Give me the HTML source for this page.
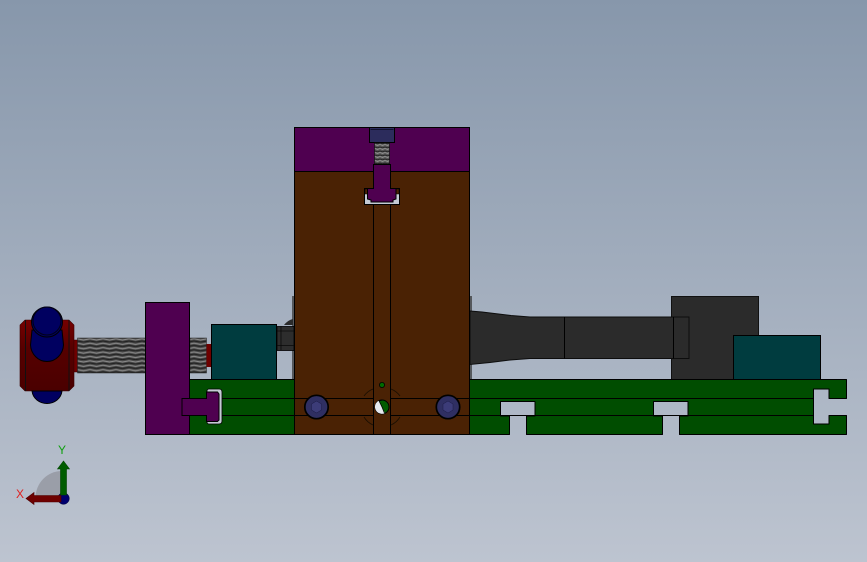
<!DOCTYPE html>
<html><head><meta charset="utf-8"><title>CAD model</title>
<style>html,body{margin:0;padding:0;width:867px;height:562px;overflow:hidden}svg{display:block}</style></head>
<body>
<svg width="867" height="562" viewBox="0 0 867 562" xmlns="http://www.w3.org/2000/svg">
<defs>
<linearGradient id="bg" x1="0" y1="0" x2="0" y2="1"><stop offset="0" stop-color="#8797ab"/><stop offset="1" stop-color="#bdc4d0"/></linearGradient>
<linearGradient id="red" x1="0" y1="0" x2="0" y2="1"><stop offset="0" stop-color="#760000"/><stop offset=".4" stop-color="#560000"/><stop offset="1" stop-color="#4a0000"/></linearGradient>
<pattern id="th" width="13" height="4.400" patternUnits="userSpaceOnUse" x="77" y="338">
<rect width="13" height="4.400" fill="#484848"/>
<path d="M0 .8L6.500 2L13 .8" stroke="#8a8a8a" stroke-width="1.100" fill="none"/>
<path d="M0 3L6.500 4.100L13 3" stroke="#202020" stroke-width="1.100" fill="none"/>
</pattern>
<pattern id="th2" width="5" height="4" patternUnits="userSpaceOnUse">
<rect width="5" height="4" fill="#565656"/><path d="M0 .5L2.500 1.500L5 .5" stroke="#8f8f8f" fill="none"/><path d="M0 3L2.500 3.800L5 3" stroke="#262626" fill="none"/>
</pattern>
</defs>
<rect width="867" height="562" fill="url(#bg)"/>

<!-- grey edge plates behind block -->
<rect x="292" y="296" width="3" height="84" fill="#55585c"/>
<rect x="469" y="296" width="3" height="84" fill="#55585c"/>

<!-- right side -->
<rect x="671.500" y="296.500" width="87" height="83" fill="#2b2b2b"/>
<path d="M671.500 379V296.500H758.500V335" fill="none" stroke="#111"/>
<path d="M470 311L482 312L511 315.500L530 317H689V358.500H530L510 360L490 362.500L470 364.500Z" fill="#2b2b2b" stroke="#0d0d0d"/>
<path d="M564.500 317V358.500M673.500 317V358.500" stroke="#000" fill="none"/>
<rect x="733.500" y="335.500" width="87" height="44" fill="#003c3f" stroke="#000"/>

<!-- rail -->
<path d="M189.500 379.500H846.500V398.500H829V389H813.500V424H829V415.500H846.500V434.500H679.500V416H688V401.500H653.500V416H662.500V434.500H526.500V416H535V401.500H500.500V416H509.500V434.500H189.500Z" fill="#004d00" stroke="#000" stroke-linejoin="round"/>
<path d="M190 398.500H813.500M190 415.500H813.500" stroke="#000" fill="none"/>

<!-- left assembly -->
<path d="M25 320H69L74 325V386L69 391H25L20 386V325Z" fill="url(#red)" stroke="#3a0000" stroke-width=".6"/>
<path d="M25.500 320V391M69 320V391" stroke="#111" fill="none"/>
<path d="M32 391C33 399 40 403.500 47 403.500C54 403.500 61 399 62 391Z" fill="#000060" stroke="#000"/>
<path d="M32 330L30.500 345C31 354 38 361.500 47 361.500C56 361.500 63 354 63.500 345L62 330Z" fill="#000060" stroke="#000"/>
<ellipse cx="47" cy="322" rx="15.500" ry="15" fill="#000060" stroke="#000"/>
<ellipse cx="47" cy="321" rx="14" ry="14" fill="none" stroke="#000018"/>
<rect x="74" y="340" width="3.500" height="32" fill="#6e0000" stroke="#3a0000" stroke-width=".5"/>
<rect x="77.500" y="338" width="68" height="35" fill="url(#th)" stroke="#222" stroke-width=".5"/>
<rect x="190" y="338" width="16.500" height="35" fill="url(#th)" stroke="#222" stroke-width=".5"/>
<rect x="206.500" y="344" width="5" height="23" fill="#6e0000"/>
<rect x="211.500" y="324.500" width="65" height="55" fill="#003c3f" stroke="#000"/>
<path d="M284 325Q288 320 293 319V325Z" fill="#2b2b2b"/>
<rect x="277" y="326.500" width="17" height="24" fill="#2d2d2d" stroke="#000" stroke-width=".8"/>
<path d="M281 326V350M277 331H294M277 345.500H294" stroke="#0a0a0a" stroke-width=".8" fill="none"/>

<rect x="145.500" y="302.500" width="44" height="132" fill="#4f0050" stroke="#000"/>
<path d="M207 391A2 2 0 0 1 209 389H219Q222 389 222 392V421Q222 424 219 424H209Q207 424 207 422Z" fill="#c4cad4" stroke="#000" stroke-width=".8"/>
<path d="M182 398.500H206.500V392H217.500L219 394V420L217.500 421.500H206.500V415.500H182Z" fill="#4f0050" stroke="#000"/>
<!-- main block -->
<rect x="294.500" y="171" width="175" height="263.500" fill="#4a2204" stroke="#000"/>
<rect x="294.500" y="127.500" width="175" height="44" fill="#4f0050" stroke="#000"/>
<path d="M294.500 398.500H373.500M390.500 398.500H469.500M294.500 415.500H373.500M390.500 415.500H469.500" stroke="#000" fill="none"/>
<path d="M373.500 204V434.500M390.500 204V434.500" stroke="#000" fill="none"/>
<g fill="none" stroke="#1a0f02" stroke-width=".8">
<path d="M364 396A20 20 0 0 1 373 389M391 389A20 20 0 0 1 400 396M364 417A20 20 0 0 0 373 425M391 425A20 20 0 0 0 400 417"/>
</g>

<!-- top bolt -->
<rect x="369.500" y="127.500" width="25" height="15" fill="#2c2c5c" stroke="#000"/>
<path d="M370.500 129.500H393.500" stroke="#12122e" fill="none"/>
<rect x="374.500" y="143" width="15" height="21" fill="url(#th2)" stroke="#111" stroke-width=".7"/>
<rect x="364.500" y="188.500" width="35" height="16" fill="#c4cad4" stroke="#000"/>
<rect x="365" y="189" width="3" height="5" fill="#4a2204" stroke="#000" stroke-width=".5"/>
<rect x="396" y="189" width="3" height="5" fill="#4a2204" stroke="#000" stroke-width=".5"/>
<path d="M373.500 164.500H390.500V188.500H396V199L393 200V202H371V200L367.500 199V188.500H373.500Z" fill="#4f0050" stroke="#000"/>

<!-- bolts -->
<circle cx="316.500" cy="407" r="11.700" fill="#2f2f62" stroke="#000" stroke-width="1.700"/>
<circle cx="448" cy="407" r="11.700" fill="#2f2f62" stroke="#000" stroke-width="1.700"/>
<path d="M316.500 401L321.500 404V410L316.500 413L311.500 410V404Z" fill="#3c3c78" stroke="#1a1a44" stroke-width=".5"/>
<path d="M448 401L453 404V410L448 413L443 410V404Z" fill="#3c3c78" stroke="#1a1a44" stroke-width=".5"/>
<circle cx="382" cy="385" r="2.600" fill="#006a00" stroke="#000" stroke-width=".8"/>
<circle cx="382" cy="407" r="7" fill="#005c00" stroke="#000"/>
<path d="M379 400.500A7 7 0 0 0 381 413.800Q384 414 385 413L382 407Z" fill="#e6e9ee"/>
<path d="M382 400.200L379 400.800L382 407L384.500 413.200" stroke="#000" stroke-width=".8" fill="none"/>

<!-- triad -->
<path d="M62 498H35.500A26.500 27 0 0 1 62 471Z" fill="#9a9ea8"/>
<circle cx="63.500" cy="498.500" r="5.800" fill="#00006e" stroke="#000030" stroke-width=".5"/>
<path d="M60.500 495V469H57.500L63.500 461L69.500 469H66.500V495Z" fill="#005c00" stroke="#004400" stroke-width=".6"/>
<path d="M61 502H34V504.500L26 498.500L34 492.500V495.500H61Z" fill="#6e0000" stroke="#4c0000" stroke-width=".6"/>
<text x="16" y="498" font-family="'Liberation Sans',sans-serif" font-size="12" fill="#e02020">X</text>
<text x="58" y="454" font-family="'Liberation Sans',sans-serif" font-size="12" fill="#10a010">Y</text>
</svg>
</body></html>
